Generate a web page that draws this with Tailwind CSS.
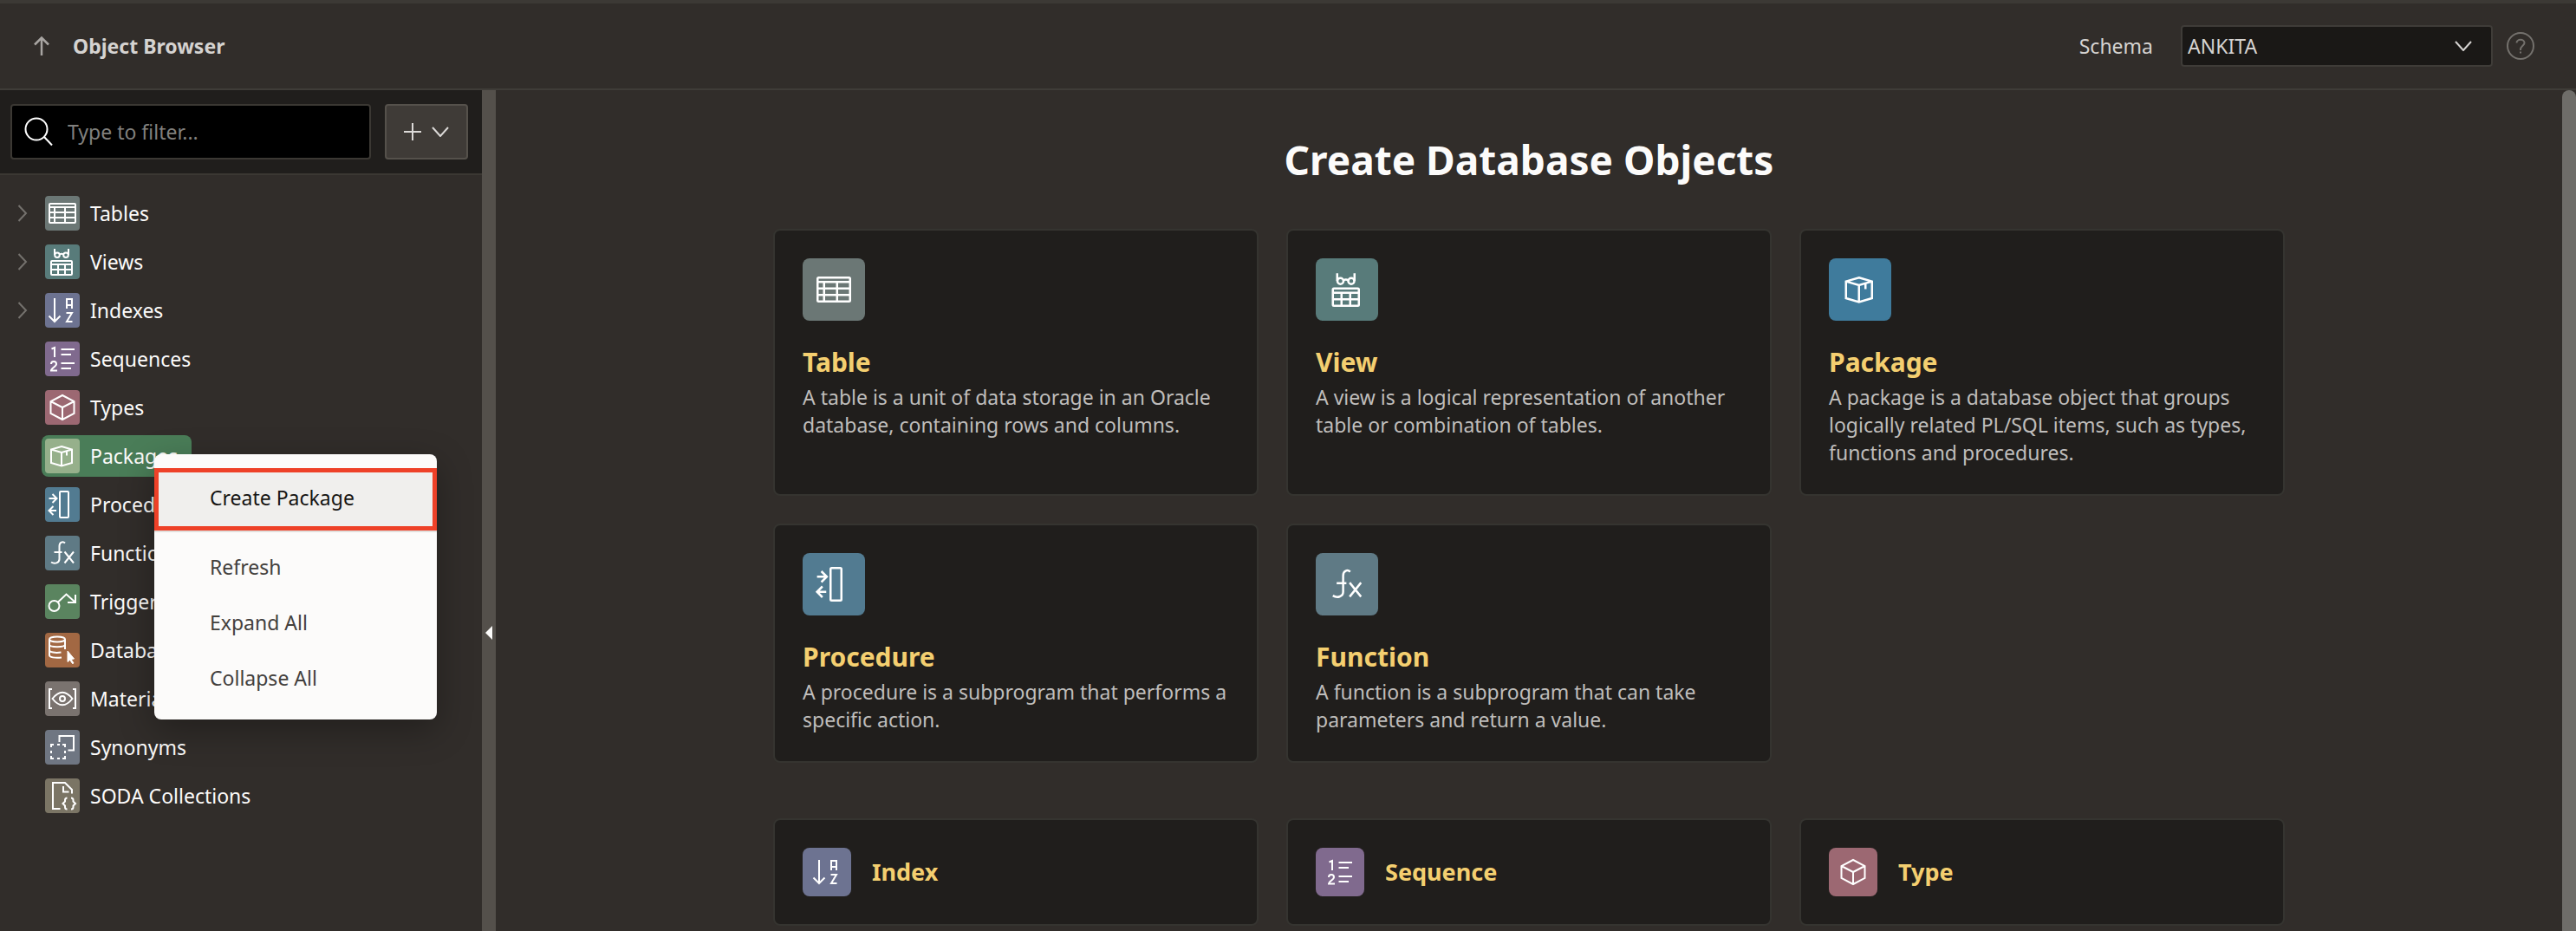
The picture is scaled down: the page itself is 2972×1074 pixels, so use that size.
<!DOCTYPE html>
<html lang="en">
<head>
<meta charset="utf-8">
<meta name="viewport" content="width=device-width, initial-scale=1">
<title>Object Browser</title>
<script src="https://cdn.jsdelivr.net/npm/@tailwindcss/browser@4"></script>
</head>
<body class="flex h-screen flex-col overflow-hidden border-t-4 border-[#3c3935] bg-[#312d2a] font-['Noto_Sans',sans-serif] text-[23px] leading-8 text-[#fcfbfa]">

<!-- Icon set, drawn on a 40 unit tile -->
<svg class="hidden" aria-hidden="true">
  <symbol id="i-table" viewBox="0 0 40 40"><rect x="5" y="9" width="30" height="22" rx="1"/><path d="M5 13H35M5 19H35M5 25H35M11 13V31M23 13V31"/></symbol>
  <symbol id="i-view" viewBox="0 0 40 40"><rect x="7" y="19" width="24" height="16" rx="1"/><path d="M7 23H31M7 29H31M15 23V35M23 23V35M11 5V12M27 5V12M16.800 11.500Q19 10 21.200 11.500"/><circle cx="14" cy="12.200" r="2.800"/><circle cx="24" cy="12.200" r="2.800"/></symbol>
  <symbol id="i-index" viewBox="0 0 40 40"><path d="M11 6V33M4.500 26.500L11 33L17.500 26.500M25 18V7H31V18M25 14H31M24.500 23H31L25 33H31.500"/></symbol>
  <symbol id="i-sequence" viewBox="0 0 40 40"><path d="M7.500 8.500L11 7V18M7 26C7 22 13 22 13 26C13 28.500 7 31 7 33.500H14M18.500 9H34M18.500 15H30M18.500 25H34M18.500 31H30"/></symbol>
  <symbol id="i-type" viewBox="0 0 40 40"><path d="M20 6L33.500 13V27L20 34L6.500 27V13ZM6.500 13L20 20L33.500 13M20 20V34"/></symbol>
  <symbol id="i-package" viewBox="0 0 40 40"><path d="M19 9L31 12.500V28L19 31.500L7 28V12.500ZM7 12.500L19 16L31 12.500M19 16V31.500M25 14V19.500"/></symbol>
  <symbol id="i-procedure" viewBox="0 0 40 40"><rect x="17" y="5" width="10" height="30" rx="1"/><path d="M4.500 13H13M8.500 8L13.500 13L8.500 18M13 27H4.500M9.500 22L4.500 27L9.500 32"/></symbol>
  <symbol id="i-function" viewBox="0 0 40 40"><path d="M23 8.500C20.500 6 16.500 7.500 16.500 12V27C16.500 31.500 11 33 7 30.500M10.500 19H19.500M22.500 18.500L33 31.500M33 18.500L22.500 31.500"/></symbol>
  <symbol id="i-trigger" viewBox="0 0 40 40"><circle cx="10.500" cy="25" r="6"/><path d="M15 20.500L24.500 11.500L34.500 20.500M35 12V21H26"/></symbol>
  <symbol id="i-database" viewBox="0 0 40 40"><ellipse cx="14" cy="7.500" rx="9" ry="3"/><path d="M5 7.500V26C5 28 11 29.500 19 28.500M23 7.500V19M5 13.500C5 17 23 17 23 13.500M5 20C5 22.500 12 23.500 18.500 22.500"/><path d="M26 21L33.500 30L30 30.500L33 35L31.500 35.500L28.800 31.300L26 33.500Z" fill="currentColor" stroke-width="1"/></symbol>
  <symbol id="i-matview" viewBox="0 0 40 40"><path d="M8 9H5V31H8M32 9H35V31H32M8.500 20Q20 5.500 31.500 20Q20 34.500 8.500 20Z"/><circle cx="20" cy="20" r="3"/></symbol>
  <symbol id="i-synonym" viewBox="0 0 40 40"><path d="M16.500 14V7H33V23.500H26.500"/><path d="M7 20V17H10M14 17H17M20 17H23V20M23 24V27M23 30V33H20M17 33H14M10 33H7V30M7 27V24"/></symbol>
  <symbol id="i-soda" viewBox="0 0 40 40"><path d="M17.500 35H9V5H23L31 13V17.500M21 9V15.500H27.500M25.500 22.500Q23 22.500 23 25V26.500L20.500 29L23 31.500V33Q23 35.500 25.500 35.500M30 22.500Q32.500 22.500 32.500 25V26.500L35 29L32.500 31.500V33Q32.500 35.500 30 35.500"/></symbol>
  <symbol id="i-twisty" viewBox="0 0 12 20"><path d="M1.500 1L10 10L1.500 19"/></symbol>
  <symbol id="i-down" viewBox="0 0 20 12"><path d="M1 1L10 11L19 1"/></symbol>
</svg>

<header class="flex h-[100px] shrink-0 items-center border-b-2 border-[#3f3c38] pr-12 pl-9">
  <a href="#" aria-label="Up" class="text-[#a8a5a2]">
    <svg class="h-6 w-6" viewBox="0 0 24 24" fill="none" stroke="currentColor" stroke-width="2.500"><path d="M12 23V3M4 10.500L12 2.500L20 10.500"/></svg>
  </a>
  <h1 class="ml-6 font-bold text-[#d5d3d1]">Object Browser</h1>
  <label for="schema" class="ml-auto text-[#d5d3d1]">Schema</label>
  <div class="relative ml-8">
    <select id="schema" class="h-12 w-[360px] appearance-none rounded border-2 border-[#3f3c38] bg-[#1a1816] px-1.5 text-[#d5d3d1]"><option>ANKITA</option></select>
    <svg class="pointer-events-none absolute top-[18px] right-6 h-3 w-5" fill="none" stroke="#d5d3d1" stroke-width="2"><use href="#i-down"/></svg>
  </div>
  <button type="button" aria-label="Help" class="ml-4 text-[#74716d]">
    <svg class="h-8 w-8" viewBox="0 0 32 32" fill="none" stroke="currentColor" stroke-width="2"><circle cx="16" cy="16" r="15"/><path d="M11.500 12.500C11.500 7.500 20.500 7.500 20.500 12.500C20.500 15.500 16 16 16 20V21"/><path d="M16 22.500V24.500"/></svg>
  </button>
</header>

<div class="flex min-h-0 flex-1">
  <aside class="relative w-[556px] shrink-0">
    <div class="flex gap-4 border-b-2 border-[#3b3833] bg-[#201e1c] py-4 pr-4 pl-3">
      <div class="flex h-16 flex-1 items-center gap-3.5 rounded border-2 border-[#3b3833] bg-black px-3.5">
        <svg class="h-9 w-9 shrink-0" viewBox="0 0 36 36" fill="none" stroke="#fff" stroke-width="2"><circle cx="14" cy="15" r="12.500"/><path d="M23 24L32 33.500"/></svg>
        <input type="text" aria-label="Type to filter" placeholder="Type to filter..." class="w-full bg-transparent outline-none placeholder:text-[#81807e]">
      </div>
      <button type="button" aria-label="Create object" class="flex h-16 w-24 items-center justify-center gap-3 rounded border-2 border-[#55514b] bg-[#3f3b37] text-[#dcdad8]">
        <svg class="h-5 w-5" viewBox="0 0 20 20" fill="none" stroke="currentColor" stroke-width="2"><path d="M10 0V20M0 10H20"/></svg>
        <svg class="h-3 w-5" fill="none" stroke="currentColor" stroke-width="2"><use href="#i-down"/></svg>
      </button>
    </div>

    <ul class="flex flex-col items-start gap-2 pt-5 pl-5" role="tree">
      <li class="flex items-center" role="treeitem"><svg class="mr-4 h-5 w-3" fill="none" stroke="#74716d" stroke-width="2"><use href="#i-twisty"/></svg><a href="#" class="flex h-12 items-center gap-3 rounded-lg px-1 pr-4"><svg class="h-10 w-10 rounded bg-[#6b7775]" fill="none" stroke="#fff" stroke-width="2"><use href="#i-table"/></svg>Tables</a></li>
      <li class="flex items-center" role="treeitem"><svg class="mr-4 h-5 w-3" fill="none" stroke="#74716d" stroke-width="2"><use href="#i-twisty"/></svg><a href="#" class="flex h-12 items-center gap-3 rounded-lg px-1 pr-4"><svg class="h-10 w-10 rounded bg-[#587b7a]" fill="none" stroke="#fff" stroke-width="2"><use href="#i-view"/></svg>Views</a></li>
      <li class="flex items-center" role="treeitem"><svg class="mr-4 h-5 w-3" fill="none" stroke="#74716d" stroke-width="2"><use href="#i-twisty"/></svg><a href="#" class="flex h-12 items-center gap-3 rounded-lg px-1 pr-4"><svg class="h-10 w-10 rounded bg-[#6d7391]" fill="none" stroke="#fff" stroke-width="2"><use href="#i-index"/></svg>Indexes</a></li>
      <li class="pl-7" role="treeitem"><a href="#" class="flex h-12 items-center gap-3 rounded-lg px-1 pr-4"><svg class="h-10 w-10 rounded bg-[#806a8e]" fill="none" stroke="#fff" stroke-width="2"><use href="#i-sequence"/></svg>Sequences</a></li>
      <li class="pl-7" role="treeitem"><a href="#" class="flex h-12 items-center gap-3 rounded-lg px-1 pr-4"><svg class="h-10 w-10 rounded bg-[#9c6872]" fill="none" stroke="#fff" stroke-width="2"><use href="#i-type"/></svg>Types</a></li>
      <li class="pl-7" role="treeitem" aria-selected="true"><a href="#" class="flex h-12 items-center gap-3 rounded-lg bg-[#4a7d58] px-1 pr-4"><svg class="h-10 w-10 rounded bg-[#96b08b]" fill="none" stroke="#fff" stroke-width="2"><use href="#i-package"/></svg>Packages</a></li>
      <li class="pl-7" role="treeitem"><a href="#" class="flex h-12 items-center gap-3 rounded-lg px-1 pr-4"><svg class="h-10 w-10 rounded bg-[#527b91]" fill="none" stroke="#fff" stroke-width="2"><use href="#i-procedure"/></svg>Procedures</a></li>
      <li class="pl-7" role="treeitem"><a href="#" class="flex h-12 items-center gap-3 rounded-lg px-1 pr-4"><svg class="h-10 w-10 rounded bg-[#5f7a85]" fill="none" stroke="#fff" stroke-width="2"><use href="#i-function"/></svg>Functions</a></li>
      <li class="pl-7" role="treeitem"><a href="#" class="flex h-12 items-center gap-3 rounded-lg px-1 pr-4"><svg class="h-10 w-10 rounded bg-[#5a845f]" fill="none" stroke="#fff" stroke-width="2"><use href="#i-trigger"/></svg>Triggers</a></li>
      <li class="pl-7" role="treeitem"><a href="#" class="flex h-12 items-center gap-3 rounded-lg px-1 pr-4"><svg class="h-10 w-10 rounded bg-[#a26843] text-white" fill="none" stroke="#fff" stroke-width="2"><use href="#i-database"/></svg>Database Links</a></li>
      <li class="pl-7" role="treeitem"><a href="#" class="flex h-12 items-center gap-3 rounded-lg px-1 pr-4"><svg class="h-10 w-10 rounded bg-[#7a736f]" fill="none" stroke="#fff" stroke-width="2"><use href="#i-matview"/></svg>Materialized Views</a></li>
      <li class="pl-7" role="treeitem"><a href="#" class="flex h-12 items-center gap-3 rounded-lg px-1 pr-4"><svg class="h-10 w-10 rounded bg-[#6f7682]" fill="none" stroke="#fff" stroke-width="2"><use href="#i-synonym"/></svg>Synonyms</a></li>
      <li class="pl-7" role="treeitem"><a href="#" class="flex h-12 items-center gap-3 rounded-lg px-1 pr-4"><svg class="h-10 w-10 rounded bg-[#7b7565]" fill="none" stroke="#fff" stroke-width="2"><use href="#i-soda"/></svg>SODA Collections</a></li>
    </ul>

    <!-- Context menu of the Packages node -->
    <div role="menu" class="absolute top-[420px] left-[178px] flex w-[326px] flex-col rounded-lg bg-[#fcfbfa] pt-4 pb-4 text-[#43403d] shadow-[0_12px_40px_rgba(0,0,0,0.3)]">
      <button type="button" role="menuitem" class="h-[72px] w-full border-5 border-[#ee4128] bg-[#f0efed] pb-1 pl-[59px] text-left text-[#161513]">Create Package</button>
      <div class="mb-2 h-0.5 bg-[#e2e0dd]"></div>
      <button type="button" role="menuitem" class="h-16 pl-16 text-left">Refresh</button>
      <button type="button" role="menuitem" class="h-16 pl-16 text-left">Expand All</button>
      <button type="button" role="menuitem" class="h-16 pl-16 text-left">Collapse All</button>
    </div>
  </aside>

  <div class="flex w-4 shrink-0 items-center justify-center bg-[#54504b]">
    <button type="button" aria-label="Collapse panel"><svg class="mt-[282px] h-4 w-2" viewBox="0 0 8 16"><path d="M8 0V16L0 8Z" fill="#fcfbfa"/></svg></button>
  </div>

  <main class="min-w-0 flex-1 overflow-hidden">
    <div class="mx-auto w-full max-w-[1744px] pt-12">
      <h2 class="mb-12 text-center text-[46px] leading-[64px] font-bold">Create Database Objects</h2>
      <div class="grid grid-cols-3 gap-8">
        <a href="#" class="block rounded-lg border-2 border-[#353430] bg-[#201e1c] p-8"><svg class="h-[72px] w-[72px] rounded-lg bg-[#6b7775] p-[11px]" fill="none" stroke="#fff" stroke-width="2"><use href="#i-table"/></svg><h3 class="mt-7 mb-1 text-[30px] leading-10 font-bold text-[#f4cf70]">Table</h3><p class="text-[#bfbdbb]">A table is a unit of data storage in an Oracle database, containing rows and columns.</p></a>
        <a href="#" class="block rounded-lg border-2 border-[#353430] bg-[#201e1c] p-8"><svg class="h-[72px] w-[72px] rounded-lg bg-[#587b7a] p-[11px]" fill="none" stroke="#fff" stroke-width="2"><use href="#i-view"/></svg><h3 class="mt-7 mb-1 text-[30px] leading-10 font-bold text-[#f4cf70]">View</h3><p class="text-[#bfbdbb]">A view is a logical representation of another table or combination of tables.</p></a>
        <a href="#" class="block rounded-lg border-2 border-[#353430] bg-[#201e1c] p-8"><svg class="h-[72px] w-[72px] rounded-lg bg-[#3f7b9c] p-[11px]" fill="none" stroke="#fff" stroke-width="2"><use href="#i-package"/></svg><h3 class="mt-7 mb-1 text-[30px] leading-10 font-bold text-[#f4cf70]">Package</h3><p class="text-[#bfbdbb]">A package is a database object that groups logically related PL/SQL items, such as types, functions and procedures.</p></a>
        <a href="#" class="block rounded-lg border-2 border-[#353430] bg-[#201e1c] p-8"><svg class="h-[72px] w-[72px] rounded-lg bg-[#527b91] p-[11px]" fill="none" stroke="#fff" stroke-width="2"><use href="#i-procedure"/></svg><h3 class="mt-7 mb-1 text-[30px] leading-10 font-bold text-[#f4cf70]">Procedure</h3><p class="text-[#bfbdbb]">A procedure is a subprogram that performs a specific action.</p></a>
        <a href="#" class="block rounded-lg border-2 border-[#353430] bg-[#201e1c] p-8"><svg class="h-[72px] w-[72px] rounded-lg bg-[#5f7a85] p-[11px]" fill="none" stroke="#fff" stroke-width="2"><use href="#i-function"/></svg><h3 class="mt-7 mb-1 text-[30px] leading-10 font-bold text-[#f4cf70]">Function</h3><p class="text-[#bfbdbb]">A function is a subprogram that can take parameters and return a value.</p></a>
      </div>
      <div class="mt-16 grid grid-cols-3 gap-8">
        <a href="#" class="flex items-center gap-6 rounded-lg border-2 border-[#353430] bg-[#201e1c] p-8"><svg class="h-14 w-14 rounded-lg bg-[#6d7391] p-2" fill="none" stroke="#fff" stroke-width="2"><use href="#i-index"/></svg><h3 class="text-[27px] leading-10 font-bold text-[#f4cf70]">Index</h3></a>
        <a href="#" class="flex items-center gap-6 rounded-lg border-2 border-[#353430] bg-[#201e1c] p-8"><svg class="h-14 w-14 rounded-lg bg-[#806a8e] p-2" fill="none" stroke="#fff" stroke-width="2"><use href="#i-sequence"/></svg><h3 class="text-[27px] leading-10 font-bold text-[#f4cf70]">Sequence</h3></a>
        <a href="#" class="flex items-center gap-6 rounded-lg border-2 border-[#353430] bg-[#201e1c] p-8"><svg class="h-14 w-14 rounded-lg bg-[#9c6872] p-2" fill="none" stroke="#fff" stroke-width="2"><use href="#i-type"/></svg><h3 class="text-[27px] leading-10 font-bold text-[#f4cf70]">Type</h3></a>
      </div>
    </div>
  </main>
  <div class="w-4 shrink-0 rounded-t-lg bg-[#6f6d69]"></div>
</div>
</body>
</html>
